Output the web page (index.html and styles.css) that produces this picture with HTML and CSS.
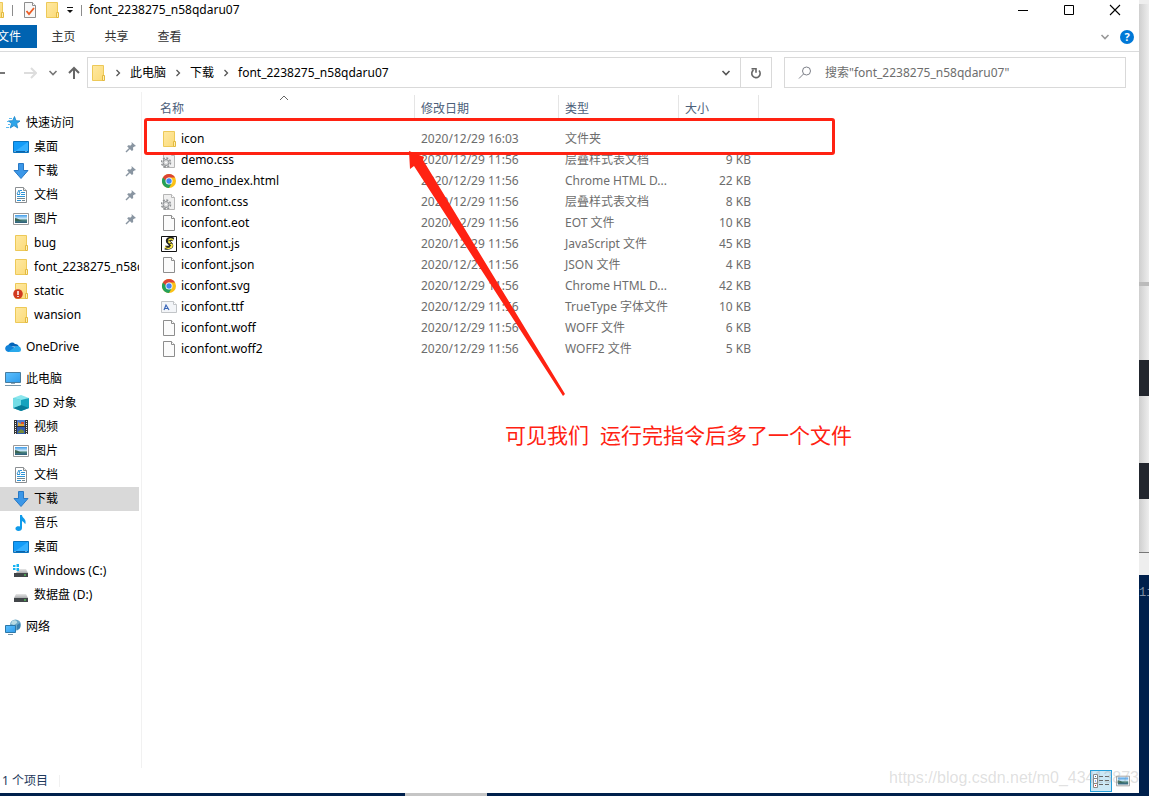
FILE: index.html
```html
<!DOCTYPE html>
<html lang="zh-CN">
<head>
<meta charset="utf-8">
<title>font_2238275_n58qdaru07</title>
<link rel="stylesheet" href="styles.css">
</head>
<body>
<svg class="defs" aria-hidden="true">
  <defs>
    <linearGradient id="gFolder" x1="0" y1="0" x2="1" y2="1"><stop offset="0" stop-color="#ffe9a2"/><stop offset="1" stop-color="#fbdb7a"/></linearGradient>
    <linearGradient id="gScreen" x1="0" y1="0" x2="1" y2="1"><stop offset="0" stop-color="#5cc0ff"/><stop offset="1" stop-color="#2f9bea"/></linearGradient>
    <linearGradient id="gPic" x1="0" y1="0" x2="0" y2="1"><stop offset="0" stop-color="#3f9be8"/><stop offset=".5" stop-color="#d9eefa"/><stop offset=".6" stop-color="#4f8a80"/><stop offset="1" stop-color="#2c5c7c"/></linearGradient>
    <linearGradient id="gDisk" x1="0" y1="0" x2="0" y2="1"><stop offset="0" stop-color="#e6e6e6"/><stop offset="1" stop-color="#a9abad"/></linearGradient>
  </defs>
  <symbol id="folder" viewBox="0 0 16 16"><path d="M2.500.5h11v15h-11z" fill="url(#gFolder)" stroke="#edc958"/><path d="M12.500 10.500h2v5h-2z" fill="#fff0b5" stroke="#e3b93f"/></symbol>
  <symbol id="star" viewBox="0 0 16 16"><path d="M9.500 1.500l1.500 4.200 4 .3-3.300 2.600 1 4.400-3.700-2.400L5.200 13l1.300-4.300L3.600 5.900l4-.2z" fill="#2da5ea" stroke="#1b83c6" stroke-width=".8"/><path d="M4 3.500h3M2 6.500h2M3 9.500h2M1 12.500h3" stroke="#58baf1"/></symbol>
  <symbol id="desktop" viewBox="0 0 16 16"><path d="M.5 2.500h15v11H.5z" fill="#139cf9" stroke="#0873bf"/><path d="M1 13L15 3v10z" fill="#35b0ff"/><path d="M1 12.500h14" stroke="#0b62a8"/><path d="M1.500 12.500h2m9 0h2" stroke="#c5e8ff" stroke-dasharray="1 1"/></symbol>
  <symbol id="down" viewBox="0 0 16 16"><path d="M5.500.5h5v7h4.500L8 15.500 1 7.500h4.500z" fill="#3b97e8" stroke="#2878c4"/></symbol>
  <symbol id="doc" viewBox="0 0 16 16"><path d="M2.500.5h8l3 3v12h-11z" fill="#fff" stroke="#8b8f92"/><path d="M10.500.5v3h3" fill="#e9e9e9" stroke="#8b8f92"/><path d="M7 3.500h2M4 7.500h3m1-2h4m-4 2h4m-8 2h8m-8 4h4" stroke="#2d94d8"/><path d="M4 11.500h8m-3 2h3" stroke="#72868f"/><path d="M4 7l2-4 1 4" fill="none" stroke="#3c98d1"/></symbol>
  <symbol id="pic" viewBox="0 0 16 16"><path d="M.5 2.500h15v11H.5z" fill="#fff" stroke="#999"/><path d="M2 4h12v8H2z" fill="url(#gPic)"/><path d="M2 7c3 0 5 3 8 3H2z" fill="#3b6654"/></symbol>
  <symbol id="pin" viewBox="0 0 12 12"><path d="M6.500 1l4.500 4-1.500.5-1.500 1 .2 2.500-1.300 1L2.200 5.500l1-1.200 2.600.2 1-1.600z" fill="#8995a1"/><path d="M5 7L1 11" stroke="#8995a1" stroke-width="1.500"/></symbol>
  <symbol id="cloud" viewBox="0 0 16 16"><path d="M3 7a4 4 0 0 1 7-2 4 4 0 0 1 4 3z" fill="#0364b8"/><path d="M3.500 13a3.500 3.500 0 1 1 2-6.500L12 10l-2 3z" fill="#1283d9"/><path d="M3 13l7-5a3.500 3.500 0 0 1 6 2.500A2.500 2.500 0 0 1 13.500 13z" fill="#29a9eb"/></symbol>
  <symbol id="pc" viewBox="0 0 16 16"><path d="M.5 1.500h15v10H.5z" fill="url(#gScreen)" stroke="#477c9f"/><path d="M6 12.500h4" stroke="#8fa6b5"/><path d="M0 14.500h16" stroke="#7895a8"/></symbol>
  <symbol id="cube" viewBox="0 0 16 16"><path d="M0 3l8-3 8 3-8 3z" fill="#8be6ed"/><path d="M0 3l8 2v11l-8-3z" fill="#3cbfce"/><path d="M16 3L8 5v11l8-3z" fill="#16a3bd"/><path d="M8 10l8 3-8 3-8-3z" fill="#087c98"/><path d="M0 3l8 2v5l-8 3z" fill="#74dde6"/></symbol>
  <symbol id="video" viewBox="0 0 16 16"><path d="M1 1h14v14H1z" fill="#353535"/><path d="M4 1h8v6H4z" fill="#527ccd"/><path d="M4 8h8v7H4z" fill="#315bad"/><path d="M5 3l3 2 3-1v3H5z" fill="#e0aa36"/><path d="M8 3h3v2H8z" fill="#d94e31"/><path d="M5 13l3-3 3 2v2H5z" fill="#768b3b"/><path d="M2.500 2v13m11-13v13" stroke="#eee" stroke-dasharray="1 1"/></symbol>
  <symbol id="music" viewBox="0 0 16 16"><path d="M7 0h2c0 3 4.500 3.500 3.500 8.500C12 10 12 7.500 9 6v7c0 2-1.500 2.900-3.500 2.900S2 14.600 2.500 13 5 10.800 7 11.500z" fill="#109bea"/></symbol>
  <symbol id="disk" viewBox="0 0 16 16"><path d="M3 7h10l2 4H1z" fill="url(#gDisk)"/><path d="M1 11h14v4H1z" fill="#424649"/><path d="M11 13h2" stroke="#58f25e"/></symbol>
  <symbol id="windisk" viewBox="0 0 16 16"><path d="M6 6h7l2 4H3z" fill="url(#gDisk)"/><path d="M1 10h14v4H1z" fill="#424649"/><path d="M11 12h2" stroke="#58f25e"/><path d="M0 2h2.500v2H0zm3.500-1H6v3H3.500zM0 5h2.500v2H0zm3.500 0H6v3H3.500z" fill="#16b3f2"/></symbol>
  <symbol id="net" viewBox="0 0 16 16"><circle cx="10.500" cy="6" r="5.500" fill="#6aa7c8"/><path d="M7 2c3-2 6 0 5 2L9 6 6 5z" fill="#b8dbe4"/><path d="M12 6l3-2v5l-3 2z" fill="#397fae"/><path d="M.5 6.500h10v7H.5z" fill="url(#gScreen)" stroke="#2c77a7"/><path d="M3 15.500h5" stroke="#7895a8"/></symbol>
  <symbol id="file" viewBox="0 0 16 16"><path d="M2.500.5h8l3 3v12h-11z" fill="#fbfbfb" stroke="#8d8d8d"/><path d="M10.500.5v3h3" fill="#fff" stroke="#8d8d8d"/></symbol>
  <symbol id="css" viewBox="0 0 16 16"><path d="M2.500.5h8l3 3v12h-11z" fill="#efefef" stroke="#b5b5b5"/><path d="M10.500.5v3h3" fill="#fff" stroke="#b5b5b5"/><circle cx="5" cy="10.500" r="4.500" fill="none" stroke="#8c8f92" stroke-width="1.500" stroke-dasharray="2 1.500"/><circle cx="5" cy="10.500" r="3" fill="#d6d7d8" stroke="#8c8f92"/><circle cx="5" cy="10.500" r="1" fill="#fff"/></symbol>
  <symbol id="chrome" viewBox="0 0 16 16"><circle cx="8" cy="8" r="7" fill="#fbc116"/><path d="M1.900 4.500A7 7 0 0 0 8 15l3-5.300L8 8z" fill="#24a05a"/><path d="M1.900 4.500A7 7 0 0 1 14.100 4.500H8a3.500 3.500 0 0 0-3.300 2.700z" fill="#db4437"/><circle cx="8" cy="8" r="3.500" fill="#fff"/><circle cx="8" cy="8" r="2.700" fill="#4285f4"/></symbol>
  <symbol id="js" viewBox="0 0 16 16"><path d="M.5.5h15v15H.5z" fill="#fff" stroke="#111"/><path d="M12.500 3.500C9 2 6 3.500 7 5.500l3 3c1 2.500-2 4-6 3" fill="none" stroke="#222" stroke-width="4"/><path d="M12 4C9 2 7 4 8 6l3 3c0 3-4 4-7 2" fill="none" stroke="#ffee45" stroke-width="1.800"/><path d="M7 5l4-1M8 8l3-1M5 12l4-1" stroke="#222" stroke-width=".8"/></symbol>
  <symbol id="ttf" viewBox="0 0 16 16"><path d="M.5 2.500h12l3 3v8H.5z" fill="#f3f5f8" stroke="#c2c5c8"/><path d="M12.500 2.500v3h3" fill="#fff" stroke="#c2c5c8"/><path d="M3 11l2-5 3 5M4 9.500h3" fill="none" stroke="#3966b8" stroke-width="1.200"/></symbol>
  <symbol id="bad" viewBox="0 0 16 16"><path d="M2.500.5h11v15h-11z" fill="url(#gFolder)" stroke="#edc958"/><path d="M12.500 10.500h2v5h-2z" fill="#fff0b5" stroke="#e3b93f"/><circle cx="5" cy="11" r="4.800" fill="#d13a20"/><path d="M5 8v4m0 1v1" stroke="#fff" stroke-width="1.500"/></symbol>
  <symbol id="check" viewBox="0 0 16 16"><path d="M2.500.5h8l3 3v12h-11z" fill="#f8f8f8" stroke="#8d8d8d"/><path d="M10.500.5v3h3" fill="#fff" stroke="#8d8d8d"/><path d="M4.500 9l2.500 3 5-6" fill="none" stroke="#ec5d24" stroke-width="1.800"/></symbol>
  <symbol id="chev" viewBox="0 0 10 10"><path d="M1.500 3L5 6.500 8.500 3" fill="none" stroke="currentColor" stroke-width="1.600"/></symbol>
  <symbol id="sep" viewBox="0 0 10 10"><path d="M3.500 2l3 3-3 3" fill="none" stroke="currentColor" stroke-width="1.300"/></symbol>
</svg>

<div class="screen">
<div class="window">
  <header class="titlebar">
    <div class="quick">
      <svg class="i cut"><use href="#folder"/></svg><span class="bar"></span>
      <button aria-label="属性"><svg class="i"><use href="#check"/></svg></button>
      <button aria-label="新建文件夹"><svg class="i"><use href="#folder"/></svg></button>
      <button aria-label="自定义快速访问工具栏"><svg class="tiny" viewBox="0 0 8 8"><path d="M1 1.500h6" stroke="#111"/><path d="M1 4h6L4 7z" fill="#111"/></svg></button>
      <span class="bar"></span>
    </div>
    <h1>font_2238275_n58qdaru07</h1>
    <div class="controls">
      <button aria-label="最小化"><svg viewBox="0 0 12 12"><path d="M1 6.500h10" stroke="#000"/></svg></button>
      <button aria-label="最大化"><svg viewBox="0 0 12 12"><path d="M1.500 1.500h9v9h-9z" fill="none" stroke="#000"/></svg></button>
      <button aria-label="关闭"><svg viewBox="0 0 12 12"><path d="M1 1l10 10M11 1L1 11" stroke="#000" stroke-width="1.100"/></svg></button>
    </div>
  </header>
  <nav class="ribbon">
    <button class="filetab">文件</button><button>主页</button><button>共享</button><button>查看</button>
    <span class="grow"></span>
    <button class="plain expand" aria-label="展开功能区"><svg class="chev"><use href="#chev"/></svg></button>
    <button class="plain help" aria-label="帮助">?</button>
  </nav>
  <div class="navbar">
    <div class="arrows">
      <button class="plain back" aria-label="后退"><svg viewBox="0 0 14 14"><path d="M1 7h12M6 2L1 7l5 5" /></svg></button>
      <button class="plain fwd" aria-label="前进"><svg viewBox="0 0 14 14"><path d="M1 7h12M8 2l5 5-5 5"/></svg></button>
      <button class="plain hist" aria-label="最近浏览的位置"><svg class="chev"><use href="#chev"/></svg></button>
      <button class="plain up" aria-label="上移"><svg viewBox="0 0 14 14"><path d="M7 13V2M2 7l5-5 5 5"/></svg></button>
    </div>
    <div class="address">
      <svg class="i"><use href="#folder"/></svg>
      <svg class="sep"><use href="#sep"/></svg><a href="#">此电脑</a>
      <svg class="sep"><use href="#sep"/></svg><a href="#">下载</a>
      <svg class="sep"><use href="#sep"/></svg><a href="#">font_2238275_n58qdaru07</a>
      <span class="grow"></span>
      <button class="plain drop" aria-label="以前的位置"><svg class="chev"><use href="#chev"/></svg></button>
      <button class="plain refresh" aria-label="刷新"><svg viewBox="0 0 12 12"><path d="M3.500 3A4.200 4.200 0 1 0 9 3.500M1.500 1.700H6v4" fill="none" stroke="#666" stroke-width="1.600"/></svg></button>
    </div>
    <label class="search"><svg viewBox="0 0 14 14" role="img" aria-label="搜索"><circle cx="8.500" cy="5" r="4" fill="none" stroke="#7d8088"/><path d="M5.500 8L1 12.500" stroke="#7d8088"/></svg><input type="search" placeholder='搜索"font_2238275_n58qdaru07"'></label>
  </div>
  <main class="content">
    <nav class="side">
      <ul>
        <li class="top"><a href="#"><svg class="i"><use href="#star"/></svg>快速访问</a></li>
        <li><a href="#"><svg class="i"><use href="#desktop"/></svg><span>桌面</span><svg class="pin"><use href="#pin"/></svg></a></li>
        <li><a href="#"><svg class="i"><use href="#down"/></svg><span>下载</span><svg class="pin"><use href="#pin"/></svg></a></li>
        <li><a href="#"><svg class="i"><use href="#doc"/></svg><span>文档</span><svg class="pin"><use href="#pin"/></svg></a></li>
        <li><a href="#"><svg class="i"><use href="#pic"/></svg><span>图片</span><svg class="pin"><use href="#pin"/></svg></a></li>
        <li><a href="#"><svg class="i"><use href="#folder"/></svg>bug</a></li>
        <li><a href="#"><svg class="i"><use href="#folder"/></svg>font_2238275_n58qdaru07</a></li>
        <li><a href="#"><svg class="i"><use href="#bad"/></svg>static</a></li>
        <li><a href="#"><svg class="i"><use href="#folder"/></svg>wansion</a></li>
      </ul>
      <ul><li class="top"><a href="#"><svg class="i"><use href="#cloud"/></svg>OneDrive</a></li></ul>
      <ul>
        <li class="top"><a href="#"><svg class="i"><use href="#pc"/></svg>此电脑</a></li>
        <li><a href="#"><svg class="i"><use href="#cube"/></svg>3D 对象</a></li>
        <li><a href="#"><svg class="i"><use href="#video"/></svg>视频</a></li>
        <li><a href="#"><svg class="i"><use href="#pic"/></svg>图片</a></li>
        <li><a href="#"><svg class="i"><use href="#doc"/></svg>文档</a></li>
        <li class="sel"><a href="#"><svg class="i"><use href="#down"/></svg>下载</a></li>
        <li><a href="#"><svg class="i"><use href="#music"/></svg>音乐</a></li>
        <li><a href="#"><svg class="i"><use href="#desktop"/></svg>桌面</a></li>
        <li><a href="#"><svg class="i"><use href="#windisk"/></svg>Windows (C:)</a></li>
        <li><a href="#"><svg class="i"><use href="#disk"/></svg>数据盘 (D:)</a></li>
      </ul>
      <ul><li class="top"><a href="#"><svg class="i"><use href="#net"/></svg>网络</a></li></ul>
    </nav>
    <section class="files">
      <table>
        <colgroup><col class="c1"><col class="c2"><col class="c3"><col class="c4"></colgroup>
        <thead><tr><th class="name">名称<svg class="sort" viewBox="0 0 10 6"><path d="M1 5l4-4 4 4" fill="none" stroke="#666"/></svg></th><th>修改日期</th><th>类型</th><th>大小</th></tr></thead>
        <tbody>
          <tr><td class="name"><svg class="i"><use href="#folder"/></svg>icon</td><td>2020/12/29 16:03</td><td>文件夹</td><td></td></tr>
          <tr><td class="name"><svg class="i"><use href="#css"/></svg>demo.css</td><td>2020/12/29 11:56</td><td>层叠样式表文档</td><td>9 KB</td></tr>
          <tr><td class="name"><svg class="i"><use href="#chrome"/></svg>demo_index.html</td><td>2020/12/29 11:56</td><td>Chrome HTML D...</td><td>22 KB</td></tr>
          <tr><td class="name"><svg class="i"><use href="#css"/></svg>iconfont.css</td><td>2020/12/29 11:56</td><td>层叠样式表文档</td><td>8 KB</td></tr>
          <tr><td class="name"><svg class="i"><use href="#file"/></svg>iconfont.eot</td><td>2020/12/29 11:56</td><td>EOT 文件</td><td>10 KB</td></tr>
          <tr><td class="name"><svg class="i"><use href="#js"/></svg>iconfont.js</td><td>2020/12/29 11:56</td><td>JavaScript 文件</td><td>45 KB</td></tr>
          <tr><td class="name"><svg class="i"><use href="#file"/></svg>iconfont.json</td><td>2020/12/29 11:56</td><td>JSON 文件</td><td>4 KB</td></tr>
          <tr><td class="name"><svg class="i"><use href="#chrome"/></svg>iconfont.svg</td><td>2020/12/29 11:56</td><td>Chrome HTML D...</td><td>42 KB</td></tr>
          <tr><td class="name"><svg class="i"><use href="#ttf"/></svg>iconfont.ttf</td><td>2020/12/29 11:56</td><td>TrueType 字体文件</td><td>10 KB</td></tr>
          <tr><td class="name"><svg class="i"><use href="#file"/></svg>iconfont.woff</td><td>2020/12/29 11:56</td><td>WOFF 文件</td><td>6 KB</td></tr>
          <tr><td class="name"><svg class="i"><use href="#file"/></svg>iconfont.woff2</td><td>2020/12/29 11:56</td><td>WOFF2 文件</td><td>5 KB</td></tr>
        </tbody>
      </table>
      <div class="mark"></div>
      <svg class="arrow" viewBox="0 0 160 250"><path d="M0 2L15 8 14 11 156 245 154 247 5 17 1 20z" fill="#ff2212"/></svg>
      <p class="note">可见我们  运行完指令后多了一个文件</p>
    </section>
  </main>
  <footer class="status">
    <span class="count">1 个项目</span>
    <span class="grow"></span>
    <button class="plain view on" aria-label="详细信息"><svg viewBox="0 0 16 16"><path d="M.5 1.500h4v13h-4zM.5 5.500h4m-4 5h4" fill="#fff" stroke="#888"/><path d="M2 3.500h1" stroke="#37a"/><path d="M2 8h1" stroke="#26f"/><path d="M2 12.500h1" stroke="#d22"/><path d="M6 3.500h10M6 7.500h10M6 11.500h10" stroke="#666" stroke-dasharray="4 2"/></svg></button>
    <button class="plain view" aria-label="大缩略图"><svg class="thumbs" viewBox="0 0 16 16"><use href="#pic"/></svg></button>
    <span class="watermark">https://blog.csdn.net/m0_43413873</span>
  </footer>
</div>
<aside class="behind">
  <div class="g1"></div><div class="g2"></div><div class="dark"></div><div class="g3"></div><div class="dark"></div><div class="g4"></div><div class="g5"></div><div class="term">1i</div>
</aside>
<div class="taskbar"><div class="thumb"></div></div>
</div>
</body>
</html>
```
FILE: styles.css
```css
* { box-sizing: border-box; }
body {
  margin: 0;
  font: 12px/18px "Noto Sans", "Noto Sans CJK SC", sans-serif;
  color: #000;
  background: #00204c;
}
button { font: inherit; color: inherit; border: 0; background: none; padding: 0; display: flex; align-items: center; justify-content: center; }
a { color: inherit; text-decoration: none; }
svg { display: block; flex: none; }
ul { list-style: none; margin: 0; padding: 0; }
.defs { position: absolute; width: 0; height: 0; }
.i { width: 16px; height: 16px; }
.grow { flex: 1; }

.screen {
  display: grid;
  grid-template: 1fr 3px / 1fr 10px;
  min-height: 100vh;
  overflow: hidden;
}
.window { display: flex; flex-direction: column; background: #fff; min-width: 0; }

.titlebar { display: flex; align-items: center; height: 20px; padding-right: 1px; }
.quick { display: flex; align-items: center; height: 20px; }
.quick .cut { margin-left: -11px; }
.quick .bar { width: 1px; height: 11px; background: #8c8c8c; margin-left: 7px; }
.quick button { margin-left: 6px; }
.quick .bar + button { margin-left: 9px; }
.quick .tiny { width: 8px; height: 8px; }
.titlebar h1 { font: inherit; margin: 0 auto 0 7px; }
.controls { display: flex; }
.controls button { width: 46px; height: 18px; }
.controls svg { width: 12px; height: 12px; }

.ribbon { display: flex; align-items: center; height: 32px; padding: 5px 5px 3px 0; border-bottom: 1px solid #dadbdc; color: #333; }
.ribbon button { width: 53px; height: 23px; padding-top: 1px; }
.ribbon .filetab { width: 37px; padding-right: 16px; background: #0063b1; color: #fff; white-space: nowrap; justify-content: flex-end; }
.ribbon .expand { width: 22px; color: #999; }
.ribbon .help { width: 14px; height: 14px; margin-left: 4px; padding: 0; border-radius: 50%; background: #0078d7; color: #fff; font-weight: bold; font-size: 11px; }
.chev { width: 10px; height: 10px; }

.navbar { display: flex; height: 40px; padding: 5px 13px 4px 0; }
.arrows { display: flex; align-items: center; width: 87px; }
.arrows svg:not(.chev) { width: 14px; height: 14px; fill: none; stroke: currentColor; stroke-width: 2; }
.back { margin-left: -8px; color: #777; }
.fwd { margin-left: 17px; color: #ddd; }
.hist { margin-left: 11px; color: #777; }
.up { margin-left: 9px; color: #666; }
.address { display: flex; align-items: center; flex: 2; height: 31px; border: 1px solid #d9d9d9; padding-left: 2px; min-width: 0; white-space: nowrap; }
.address .sep { width: 10px; height: 10px; margin: 0 7px; color: #555; }
.address .drop { width: 28px; height: 29px; color: #555; }
.address .refresh { width: 31px; height: 29px; border-left: 1px solid #d9d9d9; }
.refresh svg { width: 12px; height: 12px; }
.search { display: flex; align-items: center; width: 342px; height: 31px; margin-left: 12px; border: 1px solid #d9d9d9; padding-left: 13px; gap: 13px; }
.search svg { width: 14px; height: 14px; }
.search input { flex: 1; min-width: 0; border: 0; padding: 0; outline: 0; font: inherit; background: none; }
.search input::placeholder { color: #6d6d6d; opacity: 1; }

.content { display: flex; flex: 1; }
.side { width: 142px; padding: 19px 2px 0 0; border-right: 1px solid #f1f1f1; display: flex; flex-direction: column; gap: 8px; }
.side a { display: flex; align-items: center; gap: 5px; height: 24px; padding-left: 13px; overflow: hidden; white-space: nowrap; }
.side .top a { padding-left: 5px; }
.side .sel { background: #d9d9d9; }
.side .pin { width: 12px; height: 12px; margin: 0 2px 0 auto; }

.files { position: relative; flex: 1; padding-top: 3px; min-width: 0; }
table { border-collapse: collapse; table-layout: fixed; width: 617px; }
.c1 { width: 273px; }
.c2 { width: 144px; }
.c3 { width: 120px; }
.c4 { width: 80px; }
th { height: 25px; padding: 3px 6px 0; box-shadow: inset -1px 0 #e5e5e5; text-align: left; font-weight: normal; color: #4c607a; position: relative; }
th.name { padding-left: 18px; }
.sort { position: absolute; left: 50%; top: 0; width: 10px; height: 6px; }
tbody::before { content: ""; display: block; height: 8px; }
td { height: 21px; padding: 0 6px; color: #6d6d6d; white-space: nowrap; line-height: 20px; }
td.name { display: flex; align-items: center; gap: 4px; padding-left: 19px; color: #000; }
td:last-child { text-align: right; padding-right: 8px; }
.mark { position: absolute; left: 2px; top: 26px; width: 691px; height: 37px; border: 3px solid #ff2212; border-radius: 3px; }
.arrow { position: absolute; left: 267px; top: 57px; width: 160px; height: 250px; }
.note { position: absolute; left: 363px; top: 328px; margin: 0; font-size: 21px; line-height: 30px; color: #ff2212; white-space: pre; }

.status { position: relative; display: flex; align-items: center; height: 25px; padding: 0 5px 0 2px; color: #1e395b; }
.count { padding-right: 11px; border-right: 1px solid #f1f1f1; line-height: 12px; }
.view { width: 22px; height: 22px; }
.view svg { width: 16px; height: 16px; }
.view .thumbs { width: 14px; height: 14px; }
.view.on { border: 1px solid #26a0da; background: #cce8f6; }
.watermark { position: absolute; right: 0; top: 1px; font: 16px/18px "Liberation Sans", sans-serif; color: rgba(150, 150, 150, .3); }

.behind { display: flex; flex-direction: column; background: linear-gradient(90deg, #cfcfcf, #ededed); overflow: hidden; }
.g1 { height: 286px; border-top: 4px solid #eee; border-bottom: 4px solid #bbb; }
.g2 { height: 74px; }
.dark { height: 36px; background: #22262e; }
.g3 { height: 67px; }
.g4 { height: 54px; border-bottom: 1px solid #777; }
.g5 { height: 22px; background: #eee; }
.term { flex: 1; background: #00204c; color: #8391a5; font: 12px/36px "Liberation Mono", monospace; }
.taskbar { grid-column: 1 / -1; background: #00204c; display: flex; }
.thumb { width: 82px; margin-left: 405px; background: #c5c5c5; }
```
